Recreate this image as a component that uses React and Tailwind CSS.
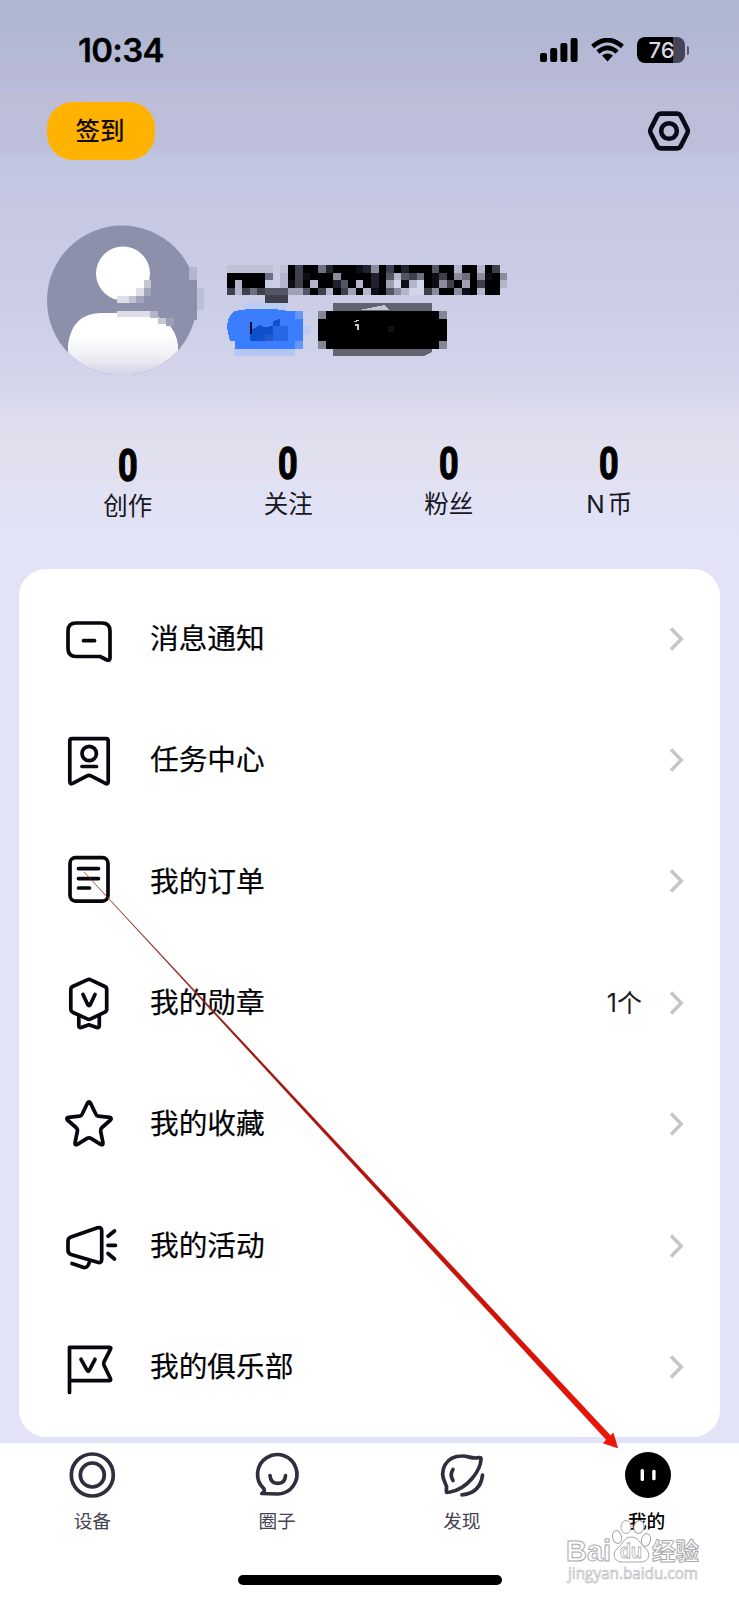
import React from "react";

const CJK = "font-['Inter','Noto_Sans_CJK_SC',sans-serif]";

const shades = {
  0: "#000003", 1: "#0d0f18", 2: "#20222e", 3: "#3e404c", 4: "#555664",
  5: "#6d6f80", 6: "#8b8c9e", 7: "#a0a1b5", 8: "#b4b5ca", 9: "#d3d5e8",
};

const nameRows = [
  "888888.80300520001260302000400800803",
  "000005.80310006000020484350130650610" + "6",
  "08000..81308002408020791890163070300" + "8",
  "38353444774038037081046899360061" + "0800",
  ".....333",
];

function MaskedName() {
  return (
    <svg className="block h-[38px] w-[281px]" viewBox="0 0 281 38" shapeRendering="crispEdges">
      {nameRows.map((row, y) =>
        row.split("").map((c, x) =>
          c === "." ? null : (
            <rect key={x + "-" + y} x={x * 7.58} y={y * 7.6} width="7.6" height="7.6" fill={y === 0 && x < 8 ? "#bfc0d4" : shades[c]} />
          )
        )
      )}
    </svg>
  );
}

function Badges() {
  return (
    <svg className="block h-[58px] w-[230px]" viewBox="227 301 230 58" shapeRendering="crispEdges">
      <rect x="243" y="303" width="44" height="53" fill="#bccbf3" />
      <rect x="234" y="348" width="61" height="8" fill="#b3c6f4" />
      <rect x="302" y="326" width="9" height="8" fill="#bdcbf1" />
      <path d="M235 311Q264 306 288 311H303V349H235V341H230Q225 325 229 318Q231 313 235 311Z" fill="#3a7dff" />
      <rect x="295" y="311" width="8" height="8" fill="#6797f7" />
      <rect x="295" y="341" width="8" height="8" fill="#6797f7" />
      <path d="M250 341V331L260 325L264 327L273 326V321L280 319V334H273V341Z" fill="#0f50cd" />
      <rect x="273" y="326" width="15" height="15" fill="#2767e7" />
      <rect x="265" y="334" width="8" height="7" fill="#2158cb" />
      <rect x="250" y="322" width="2" height="12" fill="#020b28" />
      <rect x="333" y="303" width="99" height="53" fill="#63626f" />
      <path d="M424 356H432V352Z" fill="#d0d1e7" />
      <rect x="318" y="311" width="129" height="38" fill="#858695" />
      <rect x="326" y="311" width="113" height="38" fill="#000" />
      <rect x="318" y="319" width="129" height="22" fill="#000" />
      <path d="M359 310L384 305L390 310Z" fill="#c4c5d4" />
      <path d="M354 322L359 320M355 325H358V330" stroke="#c7c7cc" fill="none" strokeWidth="1.2" />
      <rect x="388" y="326" width="6" height="6" fill="#111" />
    </svg>
  );
}

function Avatar() {
  return (
    <svg className="block h-[152px] w-[160px]" viewBox="45 223 160 152">
      <defs>
        <linearGradient id="body" x1="0" y1="0" x2="0" y2="1">
          <stop offset="0.35" stopColor="#ffffff" />
          <stop offset="0.7" stopColor="#eeeff3" />
          <stop offset="0.95" stopColor="#d4d6eb" />
        </linearGradient>
        <clipPath id="disc"><circle cx="122" cy="300.5" r="75" /></clipPath>
      </defs>
      <g clipPath="url(#disc)">
        <rect x="45" y="223" width="160" height="152" fill="#8c90aa" />
        <circle cx="123" cy="273.5" r="27" fill="#fff" />
        <path d="M68 376V345Q72 313 102 313H145Q174 318 178 345V376Z" fill="url(#body)" />
      </g>
      <g shapeRendering="crispEdges">
        <rect x="144" y="280" width="7" height="8" fill="#c4c6d5" />
        <rect x="144" y="288" width="7" height="8" fill="#a2a4b9" />
        <rect x="136" y="288" width="8" height="8" fill="#dedfe7" />
        <rect x="117" y="296" width="12" height="7" fill="#dddee7" />
        <rect x="129" y="296" width="7" height="7" fill="#c2c3d2" />
        <rect x="136" y="296" width="8" height="7" fill="#a3a5ba" />
        <rect x="117" y="311" width="33" height="6" fill="#dcdde6" />
        <rect x="150" y="311" width="8" height="7" fill="#b4b6c7" />
        <rect x="158" y="318" width="8" height="6" fill="#c5c6d4" />
        <rect x="166" y="318" width="8" height="8" fill="#9da0b5" />
        <rect x="189" y="267" width="8" height="13" fill="#b3b5cc" />
        <rect x="189" y="280" width="8" height="40" fill="#8c90aa" />
        <rect x="197" y="288" width="7" height="22" fill="#bdbfd7" />
      </g>
    </svg>
  );
}

const icons = {
  message: <><path d="M17 14H43Q51 14 51 22V49Q51 52 48 51L41 47.5H17Q9 47.5 9 39.5V22Q9 14 17 14Z" /><path d="M24.5 31.7H35.5" /></>,
  task: <><path d="M13 8.7H47Q49.2 8.7 49.2 10.9V51.5Q49.2 55 46 53.2L32 45.9Q30 44.8 28 45.9L14.2 53.2Q10.8 55 10.8 51.5V10.9Q10.8 8.7 13 8.7Z" /><circle cx="30.2" cy="23.5" r="7.2" /><path d="M23 36.5H37.5" /></>,
  order: <><rect x="11" y="6.7" width="38" height="43.4" rx="5.5" /><path d="M19.5 17.6H39.5M19.5 27.6H39.5M19.5 37H30.5" /></>,
  medal: <><path d="M28.2 6.9Q30 6 31.8 6.9L45.8 13.5Q47.7 14.4 47.7 16.4V36.3Q47.7 38.3 45.8 39.2L31.8 45.9Q30 46.8 28.2 45.9L13.6 39.2Q11.8 38.3 11.8 36.3V16.4Q11.8 14.4 13.6 13.5Z" /><path d="M24 21.5L28.8 31.8Q30 33.6 31.2 31.8L36 21.5" /><path d="M19.8 43V52.6Q19.8 55.2 22.2 54.5L30 51.8L37.8 54.5Q40.3 55.2 40.3 52.6V43" /></>,
  star: <path d="M28.5 9Q30 6.5 31.5 9L36.5 19.5Q37.2 21.6 39.5 22.2L50.5 23.3Q53.3 23.9 51.5 26L43 33.5Q41.3 35 41.6 37.2L44 48.8Q44.2 51.6 41.6 50.4L32 44.4Q30 43.2 28 44.4L18.4 50.4Q15.8 51.6 16 48.8L18.4 37.2Q18.8 35 17 33.5L8.5 26Q6.7 23.9 9.5 23.3L20.5 22.2Q22.8 21.6 23.5 19.5Z" />,
  horn: <><path d="M12 21L38.5 11.8Q42.7 10.8 42.7 14.5V43.5Q42.7 47.5 38.5 46.3L12 38.5Q9 37.4 9 34.5V25Q9 22 12 21Z" /><path d="M13 47.5L24 51.3Q28.5 52.8 30.3 46.5M49 20.2L55.5 15M49 29.3H56.5M49 37.5L55.5 43" /></>,
  flag: <><path d="M10.5 55.5V10.3H50.5Q52.5 10.3 51.4 12.4L45 24.8Q44.2 26.5 45 28.2L51.4 41.5Q52.3 43.7 50 43.7H10.5" /><path d="M22 22.3L28 33.2Q29.2 35.4 30.4 33.2L36 22.3" /></>,
};

const menu = [
  ["message", "消息通知"],
  ["task", "任务中心"],
  ["order", "我的订单"],
  ["medal", "我的勋章", "1个"],
  ["star", "我的收藏"],
  ["horn", "我的活动"],
  ["flag", "我的俱乐部"],
];

function MenuRow({ icon, label, note }) {
  return (
    <div className="flex h-[121.4px] items-center pl-10 pr-9">
      <svg className="h-[60px] w-[60px] shrink-0" viewBox="0 0 60 60" fill="none" stroke="#06070f" strokeWidth="3.7" strokeLinecap="round" strokeLinejoin="round">
        {icons[icon]}
      </svg>
      <span className="ml-[31px] flex-1 pt-px text-[28.7px] leading-none text-[#030306] [-webkit-text-stroke:0.2px]">{label}</span>
      {note && <span className="mr-[27px] pt-px text-[25px] leading-none text-[#1a1a1e]">{note}</span>}
      <svg className="h-6 w-[15px]" viewBox="0 0 15 24" fill="none" stroke="#c5c5c8" strokeWidth="3.4">
        <path d="M2 1.5L12.3 12L2 22.5" />
      </svg>
    </div>
  );
}

const stats = [["0", "创作"], ["0", "关注"], ["0", "粉丝"], ["0", "N 币"]];

const tabs = [
  ["设备", <g key="a"><circle cx="25.3" cy="25" r="21" /><circle cx="25.3" cy="25" r="12" /></g>],
  ["圈子", <g key="b"><path d="M9.8 43.5Q13.5 41.2 11.8 38.7A19.7 19.7 0 1 1 26 44Z" /><path d="M18 25.5Q18.5 33.3 25.8 33.3T33.5 25.5" /></g>],
  ["发现", <g key="c"><path d="M9.5 42.3C8.5 40 11 37 8.5 34C1 19 10 6 25 6C32 5.8 35 9.5 42 7.5Q44.5 7.3 44 9.5C43.5 20 31 39 13 42Z" /><path d="M16 19.5Q12.5 25 16 30.5M45.5 25Q43.5 43 25 44.8" /></g>],
  ["我的", <g key="d" stroke="none"><circle cx="26" cy="25" r="23" fill="#000" /><rect x="18.6" y="19" width="3.4" height="12" rx="1.5" fill="#fff" /><rect x="30.2" y="19.8" width="3.4" height="10.5" rx="1.5" fill="#fff" /></g>],
];

export default function App() {
  return (
    <div className={`${CJK} relative flex h-[1600px] w-[739px] flex-col overflow-hidden bg-[linear-gradient(180deg,#aeb6d1_0px,#b4b9d6_55px,#b9b9d6_75px,#b7bcda_86px,#bebdd8_95px,#bcbeda_148px,#c0c6e1_156px,#c7c8e2_215px,#cacce5_280px,#cfd1e9_340px,#d5d6ec_385px,#dddded_420px,#e0e0ee_460px,#e1e1f4_490px,#e3e3f8_560px)]`}>
      <div className="flex h-[98px] items-center justify-between pl-[78px] pr-[50px] pt-0.5">
        <span className="text-[33px] font-semibold leading-none tracking-[-0.7px] text-black [-webkit-text-stroke:0.3px]">10:34</span>
        <div className="flex items-center">
          <svg className="h-6 w-[38px]" viewBox="0 0 38 24">
            <rect x="0" y="15" width="7" height="9" rx="2" />
            <rect x="10.2" y="10" width="7" height="14" rx="2" />
            <rect x="20.4" y="5" width="7" height="19" rx="2" />
            <rect x="30.6" y="0" width="7" height="24" rx="2" />
          </svg>
          <svg className="ml-[13px] h-6 w-[33px]" viewBox="0 0 33 24" fill="none" stroke="#000" strokeWidth="4.6">
            <path d="M1.6 8.5Q16.5 -4.3 31.4 8.5" />
            <path d="M6.9 14Q16.5 5.8 26.1 14" />
            <path d="M11 17.6Q16.5 13.3 22 17.6L16.5 23.6Z" fill="#000" stroke="none" />
          </svg>
          <div className="ml-[13px] flex h-[26px] w-[48px] items-center justify-center rounded-[8px] bg-[linear-gradient(90deg,#000_76%,#464459_76%)] pl-px text-[22px] font-medium leading-none text-[#d8d9e2]">76</div>
          <div className="ml-[1.5px] h-[9px] w-[2.5px] rounded-r-full bg-[#55566b]" />
        </div>
      </div>

      <div className="flex h-[66px] items-center justify-between pl-[47px] pr-[48px]">
        <button className="h-[58px] w-[108px] rounded-[26px] bg-[#ffb200] pr-0.5 text-[24.5px] font-medium leading-none text-[#120c02]">签到</button>
        <svg className="h-[42px] w-[44px]" viewBox="0 0 44 42" fill="none" stroke="#080a16" strokeWidth="4.6" strokeLinejoin="round">
          <path d="M14 3.6H30Q32.3 3.6 33.5 5.4L40.4 19Q41.4 21 40.4 23L33.5 36.6Q32.3 38.4 30 38.4H14Q11.7 38.4 10.5 36.6L3.6 23Q2.6 21 3.6 19L10.5 5.4Q11.7 3.6 14 3.6Z" />
          <circle cx="22" cy="21" r="7.8" />
        </svg>
      </div>

      <div className="flex h-[281px] items-start pl-[45px] pt-[59px]">
        <Avatar />
        <div className="ml-[22px] pt-[42px]">
          <MaskedName />
          <div className="-mt-0.5"><Badges /></div>
        </div>
      </div>

      <div className="grid h-[124px] w-[644px] grid-cols-4 self-center pr-0.5">
        {stats.map(([n, label], i) => (
          <div key={label} className={i === 0 ? "flex flex-col items-center pt-[3px]" : "flex flex-col items-center pt-px"}>
            <span className="inline-block scale-x-[.76] font-[Roboto] text-[45px] font-bold leading-[36px] text-black [-webkit-text-stroke:1.4px]">{n}</span>
            <span className="mt-[8px] text-[24.5px] leading-[28px] text-[#181724] [word-spacing:-4px]">{label}</span>
          </div>
        ))}
      </div>

      <div className="mx-[19px] h-[868px] rounded-[27px] bg-white pt-[9px]">
        {menu.map(([icon, label, note]) => <MenuRow key={icon} icon={icon} label={label} note={note} />)}
      </div>

      <div className="mt-1.5 flex flex-1 flex-col bg-white">
        <div className="grid grid-cols-4 pt-[7px]">
          {tabs.map(([label, art], i) => (
            <div key={label} className="flex flex-col items-center">
              <svg className="h-[50px] w-[50px]" viewBox="0 0 50 50" fill="none" stroke="#302e3d" strokeWidth="3.7" strokeLinecap="round" strokeLinejoin="round">{art}</svg>
              <span className={i === 3 ? "mt-[12px] text-[18.7px] font-medium leading-5 text-black" : "mt-[12px] text-[18.7px] leading-5 text-[#464350]"}>{label}</span>
            </div>
          ))}
        </div>
        <div className="mx-auto mb-[15px] mt-auto h-[10px] w-[264px] rounded-full bg-black" />
      </div>

      <svg className="pointer-events-none absolute inset-0 h-[1600px] w-[739px]" viewBox="0 0 739 1600">
        <defs>
          <linearGradient id="shaft" gradientUnits="userSpaceOnUse" x1="84" y1="872" x2="617" y2="1448">
            <stop offset="0" stopColor="#8a6a60" />
            <stop offset="0.12" stopColor="#7d3228" />
            <stop offset="0.3" stopColor="#9c1510" />
            <stop offset="0.75" stopColor="#cf1208" />
            <stop offset="1" stopColor="#f01505" />
          </linearGradient>
        </defs>
        <path d="M84 872L610.5 1435.6L613.3 1433L617.8 1448L603.3 1443.3L606.3 1439.8Z" fill="url(#shaft)" stroke="#a01008" strokeWidth="0.4" />
      </svg>

      <svg className="pointer-events-none absolute left-[560px] top-[1514px] h-[76px] w-[150px]" viewBox="560 1514 150 76">
        <g fill="#fff" stroke="#a9a9ad" strokeWidth="1">
          <text x="566" y="1561" fontSize="29" fontFamily="Liberation Sans" fontWeight="bold" textLength="45" lengthAdjust="spacingAndGlyphs">Bai</text>
          <text x="652" y="1560" fontSize="23.5" fontWeight="bold" fontFamily="Noto Sans CJK SC">经验</text>
          <ellipse cx="617" cy="1537" rx="4.5" ry="6.5" transform="rotate(-12 617 1537)" />
          <ellipse cx="626" cy="1527" rx="5" ry="6.5" />
          <ellipse cx="639" cy="1527" rx="5" ry="6.5" transform="rotate(12 639 1527)" />
          <ellipse cx="646" cy="1540" rx="4.5" ry="6.5" transform="rotate(12 646 1540)" />
          <path d="M631 1537C624 1537 623 1544 618 1548C612 1552 613 1562 622 1562H641C650 1562 651 1552 645 1548C640 1544 639 1537 631 1537Z" />
          <text x="620" y="1558" fontSize="20" fontFamily="Liberation Sans" fontWeight="bold" strokeWidth="0.8" textLength="22" lengthAdjust="spacingAndGlyphs">du</text>
          <text x="568" y="1579" fontSize="16.5" fontFamily="Open Sans" strokeWidth="0.7" stroke="#b9b9bd" textLength="130" lengthAdjust="spacingAndGlyphs">jingyan.baidu.com</text>
        </g>
      </svg>
    </div>
  );
}
